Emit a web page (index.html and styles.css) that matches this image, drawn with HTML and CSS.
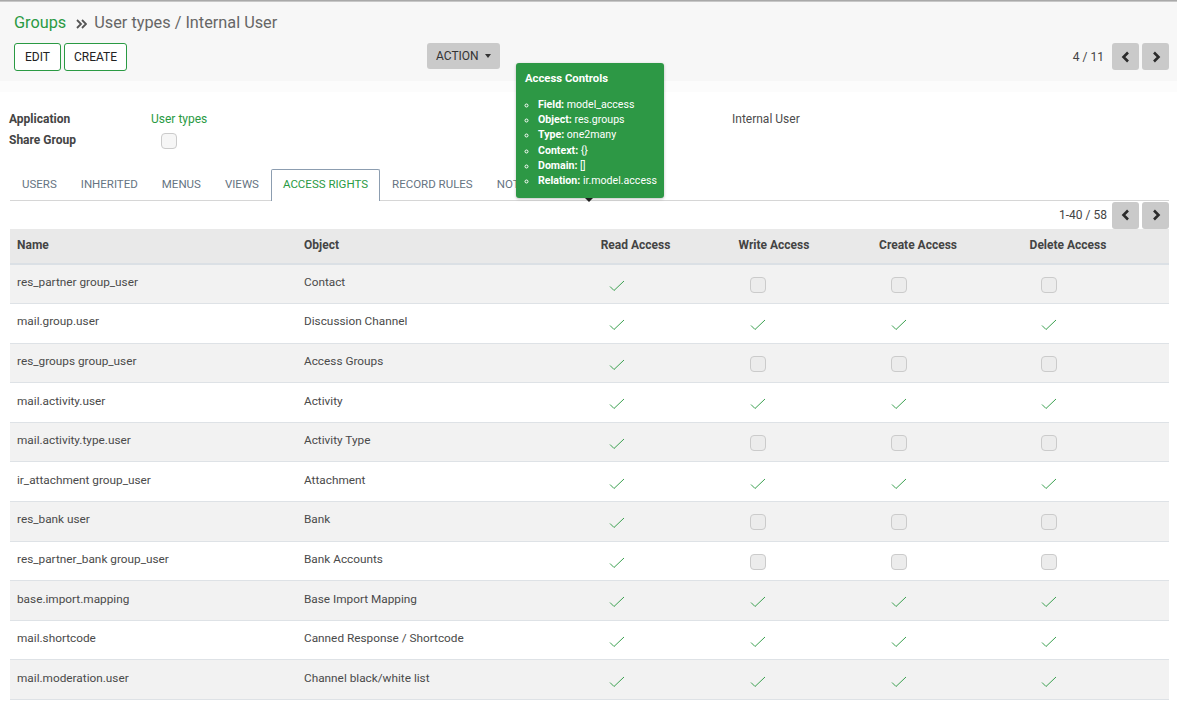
FILE: index.html
```html
<!DOCTYPE html>
<html>
<head>
<meta charset="utf-8">
<link rel="stylesheet" href="styles.css">
</head>
<body>
<div class="shadow"></div>
<div class="cp">
  <div class="crumbs"><span class="crumb-link">Groups</span><svg class="sep" width="11" height="10" viewBox="0 0 11 10"><polyline points="1,1 5,5 1,9" fill="none" stroke="#555" stroke-width="1.8"/><polyline points="6,1 10,5 6,9" fill="none" stroke="#555" stroke-width="1.8"/></svg><span class="crumb-cur">User types / Internal User</span></div>
  <div class="cp-row">
    <div class="cp-left">
      <button class="btn btn-outline btn-edit">EDIT</button>
      <button class="btn btn-outline">CREATE</button>
    </div>
    <div class="cp-mid">
      <button class="btn btn-gray">ACTION <span class="caret"></span></button>
    </div>
    <div class="pager">
      <span class="pager-val">4 / 11</span>
      <button class="pbtn"><svg width="10" height="12" viewBox="0 0 10 12"><polyline points="7,1.5 2.5,6 7,10.5" fill="none" stroke="#2b2b2b" stroke-width="2.6"/></svg></button>
      <button class="pbtn"><svg width="10" height="12" viewBox="0 0 10 12"><polyline points="3,1.5 7.5,6 3,10.5" fill="none" stroke="#2b2b2b" stroke-width="2.6"/></svg></button>
    </div>
  </div>
</div>
<div class="band"></div>

<div class="sheet">
  <div class="fields">
    <div class="lbl">Application</div><div class="val green">User types</div><div class="val right">Internal User</div>
    <div class="lbl">Share Group</div><div class="val"><span class="cb cb-light"></span></div><div></div>
  </div>

  <div class="tabs">
    <span class="tab">USERS</span>
    <span class="tab">INHERITED</span>
    <span class="tab">MENUS</span>
    <span class="tab">VIEWS</span>
    <span class="tab active">ACCESS RIGHTS</span>
    <span class="tab">RECORD RULES</span>
    <span class="tab">NOTES</span>
  </div>

  <div class="list-pager">
    <span class="pager-val">1-40 / 58</span>
    <button class="pbtn"><svg width="10" height="12" viewBox="0 0 10 12"><polyline points="7,1.5 2.5,6 7,10.5" fill="none" stroke="#2b2b2b" stroke-width="2.6"/></svg></button>
    <button class="pbtn"><svg width="10" height="12" viewBox="0 0 10 12"><polyline points="3,1.5 7.5,6 3,10.5" fill="none" stroke="#2b2b2b" stroke-width="2.6"/></svg></button>
  </div>

  <table class="grid">
    <colgroup>
      <col class="c-name"><col class="c-obj"><col class="c-read"><col class="c-write"><col class="c-create"><col class="c-delete"><col class="c-trash">
    </colgroup>
    <thead>
      <tr><th class="l">Name</th><th class="l">Object</th><th>Read Access</th><th>Write Access</th><th>Create Access</th><th>Delete Access</th><th></th></tr>
    </thead>
    <tbody id="rows"></tbody>
  </table>
</div>

<div class="tip">
  <div class="tip-title">Access Controls</div>
  <ul>
    <li><b>Field:</b> model_access</li>
    <li><b>Object:</b> res.groups</li>
    <li><b>Type:</b> one2many</li>
    <li><b>Context:</b> {}</li>
    <li><b>Domain:</b> []</li>
    <li><b>Relation:</b> ir.model.access</li>
  </ul>
  <span class="tip-arrow"></span>
</div>

<script>
var data = [
  ["res_partner group_user","Contact",1,0,0,0],
  ["mail.group.user","Discussion Channel",1,1,1,1],
  ["res_groups group_user","Access Groups",1,0,0,0],
  ["mail.activity.user","Activity",1,1,1,1],
  ["mail.activity.type.user","Activity Type",1,0,0,0],
  ["ir_attachment group_user","Attachment",1,1,1,1],
  ["res_bank user","Bank",1,0,0,0],
  ["res_partner_bank group_user","Bank Accounts",1,0,0,0],
  ["base.import.mapping","Base Import Mapping",1,1,1,1],
  ["mail.shortcode","Canned Response / Shortcode",1,1,1,1],
  ["mail.moderation.user","Channel black/white list",1,1,1,1]
];
var check = '<svg class="chk" width="16" height="12" viewBox="0 0 16 12"><polyline points="1,6.5 5,10.5 15,1" fill="none" stroke="#3aa04f" stroke-width="1"/></svg>';
var box = '<span class="cb"></span>';
var html = "";
data.forEach(function(r){
  html += '<tr><td class="l">'+r[0]+'</td><td class="l">'+r[1]+'</td>';
  for (var i=2;i<6;i++) html += '<td class="c">'+(r[i]?check:box)+'</td>';
  html += '<td></td></tr>';
});
document.getElementById("rows").innerHTML = html;
</script>
</body>
</html>
```
FILE: styles.css
```css
* { box-sizing: border-box; }
body {
  margin: 0;
  font-family: Roboto, "Liberation Sans", sans-serif;
  font-size: 12px;
  color: #4c4c4c;
  background: #fff;
  width: 1177px;
  position: relative;
}
.shadow {
  height: 2px;
  background: linear-gradient(#9a9a9a, #d6d6d6);
}
.cp {
  background: #f7f7f7;
  height: 79px;
  padding: 10px 8px 0 14px;
}
.crumbs {
  font-size: 16.3px;
  line-height: 22px;
  height: 22px;
  display: flex;
  align-items: center;
}
.crumb-link { color: #2a9a43; }
.sep { margin: 1px 7px 0 10px; }
.crumb-cur { color: #666; }
.cp-row {
  display: grid;
  grid-template-columns: 413px 1fr auto;
  margin-top: 9px;
  align-items: start;
}
.cp-left { display: flex; gap: 3px; }
.btn {
  font-family: Roboto, "Liberation Sans", sans-serif;
  font-size: 12px;
  height: 28px;
  border-radius: 3px;
  padding: 0 9px;
  color: #222;
  cursor: pointer;
}
.btn-outline {
  background: #fff;
  border: 1px solid #2a9a43;
}
.btn-edit { padding: 0 10px; }
.btn-gray {
  background: #cacaca;
  border: none;
  height: 26px;
  padding: 0 9px;
  color: #333;
}
.caret {
  display: inline-block;
  width: 0; height: 0;
  border-left: 3.5px solid transparent;
  border-right: 3.5px solid transparent;
  border-top: 4px solid #333;
  vertical-align: middle;
  margin-left: 3px;
  margin-top: -2px;
}
.pager {
  display: flex;
  align-items: center;
  gap: 3px;
}
.pager-val { margin-right: 5px; color: #444; }
.pbtn {
  width: 27px;
  height: 27px;
  border: none;
  border-radius: 3px;
  background: #cacaca;
  display: flex;
  align-items: center;
  justify-content: center;
  padding: 0;
}
.band { height: 11px; background: #fcfcfc; }

.sheet { padding: 0 8px 0 9px; }
.fields {
  display: grid;
  grid-template-columns: 142px 581px 1fr;
  grid-auto-rows: 21px;
  align-items: center;
  margin-top: 16px;
}
.lbl { font-weight: bold; color: #444; }
.green { color: #2a9a43; }
.cb {
  display: inline-block;
  width: 16px;
  height: 16px;
  border: 1px solid #cbcbcb;
  background: #ececec;
  border-radius: 4px;
  vertical-align: middle;
}
.cb-light { background: #f6f6f6; margin-left: 10px; margin-top: 2px; }

.tabs {
  display: flex;
  margin-top: 19px;
  border-bottom: 1px solid #d6d6d6;
  height: 32px;
  margin-left: 1px;
}
.tab {
  padding: 0 11px;
  height: 31px;
  line-height: 29px;
  font-size: 11.5px;
  color: #667482;
  border: 1px solid transparent;
  border-bottom: none;
}
.tab.active {
  border-color: #8c9db0;
  color: #2a9a43;
  background: #fff;
  height: 32px;
  border-radius: 2px 2px 0 0;
}
.list-pager {
  display: flex;
  justify-content: flex-end;
  align-items: center;
  gap: 3px;
  height: 28px;
  margin-top: 0;
}
.list-pager .pager-val { margin-right: 2px; }

table.grid {
  width: 1159px;
  margin-left: 1px;
  border-collapse: collapse;
  table-layout: fixed;
}
.c-name { width: 287px; }
.c-obj { width: 269px; }
.c-read { width: 139px; }
.c-write { width: 138px; }
.c-create { width: 150px; }
.c-delete { width: 150px; }
.c-trash { width: 26px; }
thead th {
  background: #e9e9e9;
  height: 35px;
  font-weight: bold;
  color: #444;
  text-align: center;
  border-bottom: 2px solid #dbe0e5;
  padding: 0 0 2px 0;
}
th.l, td.l { text-align: left; padding-left: 7px; }
tbody tr { height: 39.6px; }
tbody td {
  border-bottom: 1px solid #dee2e6;
  padding: 0;
  color: #4a4a4a;
  vertical-align: middle;
  font-size: 11.8px;
}
tbody td.l { padding-bottom: 4px; }
tbody tr:nth-child(odd) td { background: #f2f2f2; }
td.c { text-align: center; padding-right: 38px; padding-top: 2px; }
td.c:nth-child(4) { padding-right: 32px; }
.chk { vertical-align: middle; }

.tip {
  position: absolute;
  left: 516px;
  top: 63px;
  width: 148px;
  height: 135px;
  background: #2d9845;
  border-radius: 3px;
  color: #fff;
  padding: 9px 6px 0 9px;
  box-shadow: 0 1px 3px rgba(0,0,0,0.25);
  font-size: 10.6px;
}
.tip-title { font-weight: bold; font-size: 11.3px; line-height: 14px; }
.tip ul {
  list-style: circle;
  margin: 11px 0 0 0;
  padding-left: 13px;
}
.tip li { line-height: 15.2px; white-space: nowrap; }
.tip-arrow {
  position: absolute;
  left: 69px;
  bottom: -4px;
  width: 0; height: 0;
  border-left: 4px solid transparent;
  border-right: 4px solid transparent;
  border-top: 4px solid #1d1d1d;
}
```
